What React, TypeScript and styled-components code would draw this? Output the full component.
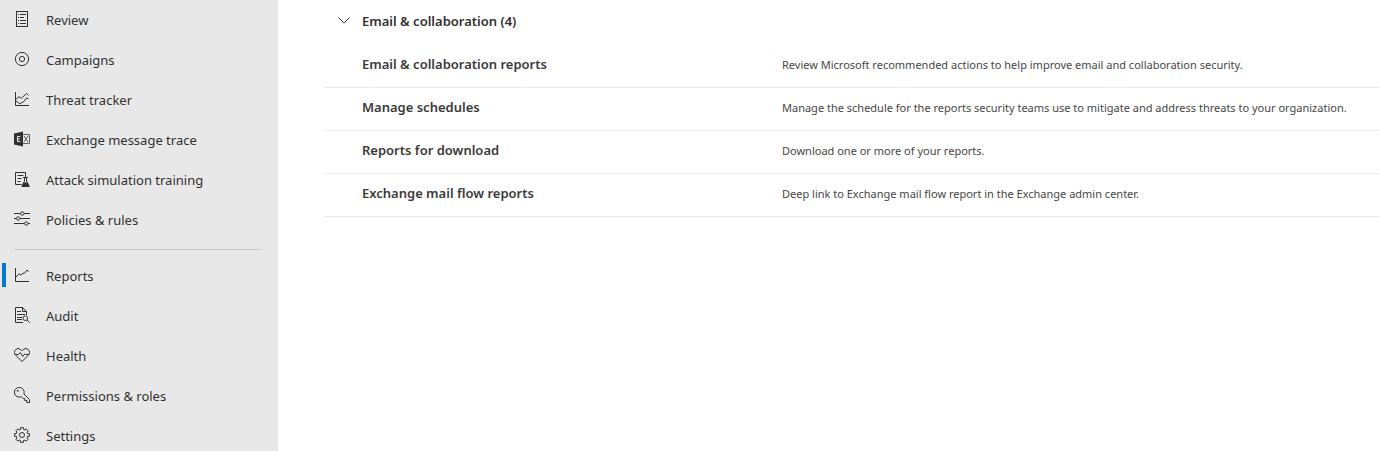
import React, { useState } from "react";
import styled, { createGlobalStyle } from "styled-components";

const GlobalStyle = createGlobalStyle`
  *, *::before, *::after { box-sizing: border-box; }
  body {
    margin: 0;
    background: #fff;
    color: #323130;
    font-family: "Segoe UI", "Noto Sans", "Open Sans", sans-serif;
    font-size: 13px;
  }
`;

const Page = styled.div`
  display: flex;
  height: 100vh;
  overflow: hidden;
`;

const Sidebar = styled.nav`
  flex: 0 0 278px;
  background: #e8e8e8;
  overflow: hidden;
`;

const NavList = styled.ul`
  list-style: none;
  margin: 0;
  padding: 0;
`;

const NavLink = styled.a<{ $active?: boolean }>`
  display: flex;
  align-items: center;
  gap: 16px;
  height: 40px;
  padding-left: 2px;
  color: #323130;
  line-height: 20px;
  white-space: nowrap;
  text-decoration: none;

  &::before {
    content: "";
    width: 4px;
    height: 24px;
    margin: 0 -8px 2px 0;
    background: ${(p) => (p.$active ? "#0078d4" : "transparent")};
  }
`;

const Icon = styled.svg`
  flex: none;
  width: 16px;
  height: 16px;
  margin-bottom: 2px;
  fill: none;
  stroke: #323130;
  stroke-width: 1;
`;

const Divider = styled.hr`
  height: 1px;
  margin: 9px 16px 6px 14px;
  border: 0;
  background: #c8c8c8;
`;

const Main = styled.main`
  flex: 1;
  min-width: 0;
  padding-left: 47px;
`;

const GroupHeading = styled.h2`
  margin: 0;
  font-size: 13px;
  font-weight: 600;
`;

const GroupToggle = styled.button`
  display: flex;
  align-items: center;
  gap: 12px;
  width: 100%;
  height: 45px;
  padding: 0 0 3px 13px;
  border: 0;
  background: none;
  color: #323130;
  font: inherit;
  text-align: left;
  cursor: pointer;
`;

const Chevron = styled.svg<{ $open: boolean }>`
  width: 12px;
  height: 8px;
  margin-bottom: 2px;
  fill: none;
  stroke: #323130;
  transform: ${(p) => (p.$open ? "none" : "rotate(-90deg)")};
`;

const Table = styled.table`
  width: 100%;
  border-spacing: 0;
  table-layout: fixed;
`;

const Row = styled.tr`
  height: 43px;

  & > * {
    border-bottom: 1px solid #edebe9;
  }
`;

const NameCell = styled.th`
  width: 457px;
  padding: 0 0 4px 37px;
  color: #3b3a39;
  font-size: 13px;
  font-weight: 600;
  line-height: 20px;
  text-align: left;
`;

const DescriptionCell = styled.td`
  padding: 0 0 2px;
  color: #484644;
  font-size: 11px;
  line-height: 16px;
  white-space: nowrap;
`;

const teeth = Array.from({ length: 8 }, (_, i) => {
  const at = (r: number, deg: number) => {
    const a = ((i * 45 + deg) * Math.PI) / 180;
    return `${(8 + r * Math.cos(a)).toFixed(2)} ${(8 + r * Math.sin(a)).toFixed(2)}`;
  };
  return `${i ? "L" : "M"}${at(5.8, -14)}L${at(7.5, -11)}L${at(7.5, 11)}L${at(5.8, 14)}`;
}).join("");

const icons = {
  review: (
    <>
      <rect x="2.5" y="0.5" width="11" height="15" />
      <path d="M4 3.5h1M4 6.5h1M4 9.5h1M4 12.5h1M6 3.5h6M6 6.5h4M6 9.5h6M6 12.5h6" />
    </>
  ),
  campaigns: (
    <>
      <circle cx="8" cy="8" r="6.6" />
      <circle cx="8" cy="8" r="2.6" />
    </>
  ),
  tracker: (
    <path d="M1.5 1v13.500H15M2 8.300l3-2.600 2.300 1.600L12.500 2.500l2 1.800M2 10l3.700 2.700 4-2L12.500 7l2 1" />
  ),
  exchange: (
    <>
      <path d="M0 2.500L9 .5v15L0 13.500z" fill="#323130" stroke="none" />
      <path d="M6.200 5.500H3.500v5h2.700M3.500 8h2.400" stroke="#e8e8e8" />
      <path d="M9 3.500h6.500v9H9" stroke="#605e5c" />
      <path d="M10 5l4 6M14 5l-4 6" stroke="#605e5c" />
    </>
  ),
  attack: (
    <>
      <path d="M7.500 13.500h-6V1.500h10V6M3.500 4.500h6M3.500 7.500h4M3.500 10.500h3" />
      <path d="M9 6.500h5M10.500 6.500V10L8 15.500h7L12.500 10V6.500" />
      <path d="M9.600 12h3.900l1.800 3.700H7.900z" fill="#323130" />
    </>
  ),
  policies: (
    <>
      <path d="M0 2.500h6.500M10 2.500h6M0 7.500h2.500M6 7.500h10M0 12.500h10.500M14 12.500h2" />
      <circle cx="8.300" cy="2.500" r="1.700" />
      <circle cx="4.200" cy="7.500" r="1.700" />
      <circle cx="12.300" cy="12.500" r="1.700" />
    </>
  ),
  reports: <path d="M1.500 1v13.500H15M1.700 10.500L5 6.700l2 1.500L9 6l1.200.5L13 3l1.800 1.700" />,
  audit: (
    <>
      <path d="M9 15.500H1.500V.5h7l4 4V8M8.500.5v4h4M3 4.500h4M3 7.500h8M3 10.500h5M3 12.500h5" />
      <circle cx="11.300" cy="11.200" r="2.300" />
      <path d="M13 13l2.700 2.700" />
    </>
  ),
  health: (
    <>
      <path d="M8 14.500L1.600 8.200A3.700 3.700 0 0 1 1.500 2.800 3.700 3.700 0 0 1 6.800 2.600L8 3.800 9.200 2.600A3.700 3.700 0 0 1 14.500 2.800 3.700 3.700 0 0 1 14.400 8.200z" />
      <path d="M1 7.500h3.500l1.700-2 2.500 4 2-2.500 1 .5H15" />
    </>
  ),
  permissions: (
    <>
      <path d="M9.900 6.900L15.500 12.500v3h-2.700v-2h-2v-2H9.200L7.300 9.700A4.900 4.900 0 1 1 9.900 6.900z" />
      <circle cx="3.800" cy="3.800" r="0.600" />
    </>
  ),
  settings: (
    <>
      <path d={`${teeth}z`} strokeLinejoin="round" />
      <circle cx="8" cy="8" r="2.500" />
    </>
  ),
};

type NavEntry = { icon: keyof typeof icons; label: string; active?: boolean };

const securityNav: NavEntry[] = [
  { icon: "review", label: "Review" },
  { icon: "campaigns", label: "Campaigns" },
  { icon: "tracker", label: "Threat tracker" },
  { icon: "exchange", label: "Exchange message trace" },
  { icon: "attack", label: "Attack simulation training" },
  { icon: "policies", label: "Policies & rules" },
];

const adminNav: NavEntry[] = [
  { icon: "reports", label: "Reports", active: true },
  { icon: "audit", label: "Audit" },
  { icon: "health", label: "Health" },
  { icon: "permissions", label: "Permissions & roles" },
  { icon: "settings", label: "Settings" },
];

const reports = [
  {
    name: "Email & collaboration reports",
    description:
      "Review Microsoft recommended actions to help improve email and collaboration security.",
  },
  {
    name: "Manage schedules",
    description:
      "Manage the schedule for the reports security teams use to mitigate and address threats to your organization.",
  },
  { name: "Reports for download", description: "Download one or more of your reports." },
  {
    name: "Exchange mail flow reports",
    description: "Deep link to Exchange mail flow report in the Exchange admin center.",
  },
];

function NavGroup({ entries }: { entries: NavEntry[] }) {
  return (
    <NavList>
      {entries.map((e) => (
        <li key={e.label}>
          <NavLink href="#" $active={e.active} aria-current={e.active ? "page" : undefined}>
            <Icon viewBox="0 0 16 16" aria-hidden="true">
              {icons[e.icon]}
            </Icon>
            {e.label}
          </NavLink>
        </li>
      ))}
    </NavList>
  );
}

export default function App() {
  const [open, setOpen] = useState(true);
  return (
    <>
      <GlobalStyle />
      <Page>
        <Sidebar>
          <NavGroup entries={securityNav} />
          <Divider />
          <NavGroup entries={adminNav} />
        </Sidebar>
        <Main>
          <GroupHeading>
            <GroupToggle aria-expanded={open} onClick={() => setOpen(!open)}>
              <Chevron $open={open} viewBox="0 0 12 8" aria-hidden="true">
                <path d="M0.500 1.500L6 7l5.500-5.500" />
              </Chevron>
              Email &amp; collaboration ({reports.length})
            </GroupToggle>
          </GroupHeading>
          {open && (
            <Table>
              <tbody>
                {reports.map((r) => (
                  <Row key={r.name}>
                    <NameCell scope="row">{r.name}</NameCell>
                    <DescriptionCell>{r.description}</DescriptionCell>
                  </Row>
                ))}
              </tbody>
            </Table>
          )}
        </Main>
      </Page>
    </>
  );
}
